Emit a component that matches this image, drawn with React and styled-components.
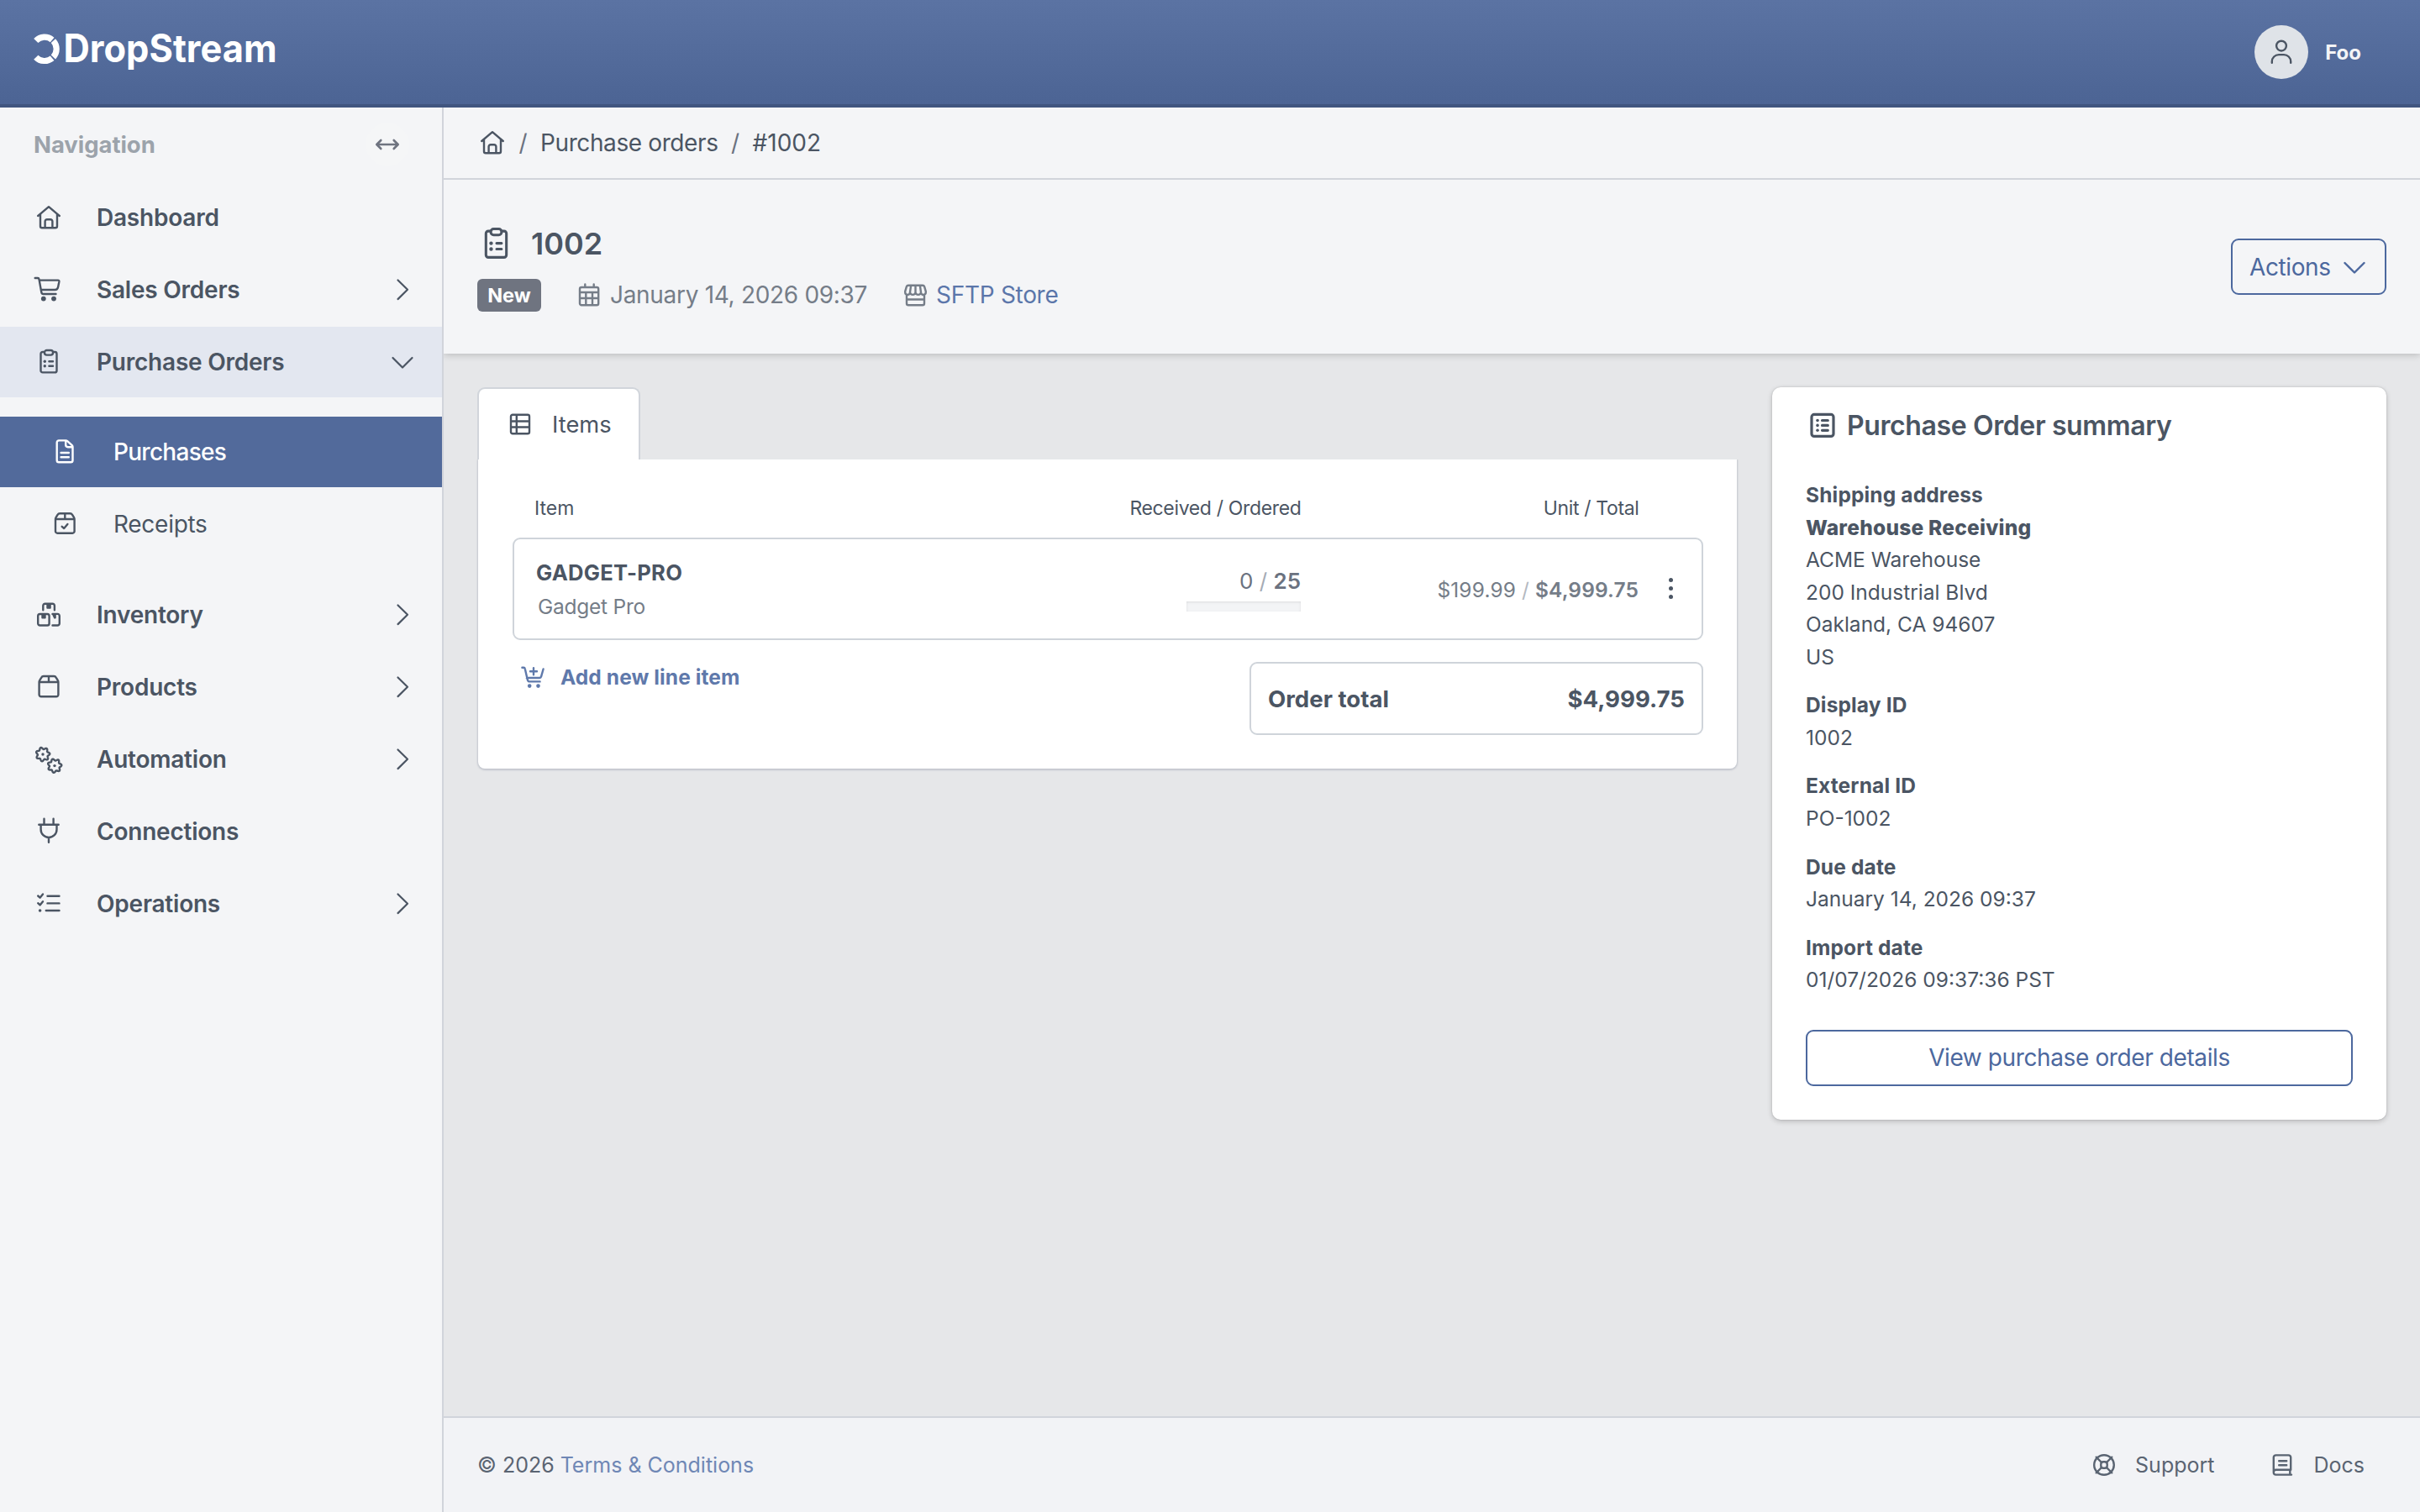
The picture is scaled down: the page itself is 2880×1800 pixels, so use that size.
import { useState } from 'react';
import styled, { createGlobalStyle, css } from 'styled-components';

const GlobalStyle = createGlobalStyle`
  * { box-sizing: border-box; }
  body { margin: 0; background: #e6e7e9; color: #4b5563; font-family: Inter, "Liberation Sans", sans-serif; }
  a { color: inherit; text-decoration: none; }
  button { font-family: inherit; cursor: pointer; }
`;

/* ---------- icons ---------- */

const IconSt = styled.svg`
  display: block;
  flex: none;
  width: 32px;
  height: 32px;
  overflow: visible;
  fill: none;
  stroke: currentColor;
  stroke-width: ${({ $w }) => $w || 2.4};
  stroke-linecap: round;
  stroke-linejoin: round;
  .dot { fill: currentColor; stroke: none; }
`;

const gear = (cx, cy) => {
  const pts = [];
  for (let i = 0; i <= 84; i++) {
    const t = (i / 84) * Math.PI * 2;
    const r = 7.2 + 1.15 * Math.cos(7 * t + 0.6);
    pts.push(`${(cx + r * Math.cos(t)).toFixed(2)} ${(cy + r * Math.sin(t)).toFixed(2)}`);
  }
  return `M${pts.join('L')}Z`;
};

const icons = {
  home: <path d="M3.2 14 16 3.2 28.8 14M6 12v14.2a2 2 0 0 0 2 2h16a2 2 0 0 0 2-2V12M11.6 28v-7.4a2.4 2.4 0 0 1 2.4-2.4h4a2.4 2.4 0 0 1 2.4 2.4V28" />,
  cart: <>
    <path d="M-.3 2H3q1.2 0 1.5 1.4L7.3 19q.4 2 2.2 2h15M5 4.6h22q1.6 0 1.4 1.6l-1.3 6.6q-.6 3.2-3.8 3.2H7" />
    <circle className="dot" cx="9.8" cy="26.6" r="2.9" /><circle className="dot" cx="22" cy="26.6" r="2.9" />
  </>,
  clipboard: <>
    <path d="M10.5 4H8.7a2.2 2.2 0 0 0-2.2 2.2v20a2.2 2.2 0 0 0 2.2 2.2h14.6a2.2 2.2 0 0 0 2.2-2.2v-20A2.2 2.2 0 0 0 23.3 4h-1.8" />
    <rect x="11" y="2" width="10" height="5.6" rx="2.6" />
    <path d="M16.4 15.3h4.6M16.4 20.7h4.6" />
    <circle className="dot" cx="11.3" cy="15.3" r="1.7" /><circle className="dot" cx="11.3" cy="20.7" r="1.7" />
  </>,
  file: <path d="M9 2.4h8.4q1 0 1.8.7l5.5 5q.8.7.8 1.8V26a2.3 2.3 0 0 1-2.3 2.3H9A2.3 2.3 0 0 1 6.7 26V4.7A2.3 2.3 0 0 1 9 2.4ZM17.2 2.6v5a2.6 2.6 0 0 0 2.6 2.6h5.4M11.6 17h9.2M11.6 22.2h9.2" />,
  receipt: <path d="M5 10v14.4a2.3 2.3 0 0 0 2.3 2.3h18a2.3 2.3 0 0 0 2.3-2.3V10M5 10q0-1 .5-1.8l2-3.4Q8.5 3.2 10.2 3.2h12.2q1.7 0 2.7 1.6l2 3.4q.5.8.5 1.8zM16.3 3.2V10M12.7 18.8l2.5 2.2 4.2-5" />,
  box: <path d="M4.6 10v15a2.3 2.3 0 0 0 2.3 2.3h18.2a2.3 2.3 0 0 0 2.3-2.3V10M4.6 10q0-1 .5-1.8l2-3.4Q8.1 3 9.8 3h12.4q1.7 0 2.7 1.8l2 3.4q.5.8.5 1.8zM16 3v7" />,
  boxes: <>
    <path d="M9.3 10.3V5a2.3 2.3 0 0 1 2.3-2.3h9A2.3 2.3 0 0 1 22.9 5v5.3" />
    <rect x="3.2" y="15" width="13.4" height="13.5" rx="2.3" />
    <path d="M20.5 28.5h6a2.3 2.3 0 0 0 2.3-2.3v-9a2.3 2.3 0 0 0-2.3-2.3h-6" />
    <path className="dot" d="M13.3 2.5h5.5v5.2q0 1-1 1h-3.5q-1 0-1-1zM7.3 15h5.4v4.5q0 1-1 1H8.3q-1 0-1-1zM19.8 15h5v4.5q0 1-1 1h-1.5z" />
  </>,
  gears: <>
    <path d={gear(9, 10)} /><path d={gear(23, 23.6)} />
    <circle className="dot" cx="9" cy="10" r="1.7" /><circle className="dot" cx="23" cy="23.6" r="1.7" />
  </>,
  plug: <path d="M4.3 7.8h23.4M10.5.7v7M21.6.7v7M6.6 8.2v5.3a9.45 9.45 0 0 0 18.9 0V8.2M16 23v5.8" />,
  tasks: <>
    <path d="M14.5 6.7h14M14.5 15.4h14M12.8 24h15.7M3.2 6.5l2.4 2.2L9 4.5M3.2 15.2l2.4 2.2L9 13.2" />
    <circle className="dot" cx="5.6" cy="24" r="1.8" />
  </>,
  calendar: <path d="M7 7h18.2a2 2 0 0 1 2 2v17.2a2 2 0 0 1-2 2H7a2 2 0 0 1-2-2V9a2 2 0 0 1 2-2ZM11.3 3.5V7M21.7 3.5V7M5 13h22M5 20h22M12.3 13v15M20 13v15" />,
  store: <path d="M8 4.700h17q1.600 0 2.100 1.500l1.700 5.600v1.300a2.900 2.900 0 0 1-5.800 0 3.300 3.300 0 0 1-6.500 0 3.300 3.300 0 0 1-6.500 0 2.900 2.900 0 0 1-5.800 0v-1.300L5.900 6.200Q6.400 4.700 8 4.700ZM10 13l1.100-8M23 13l-1.100-8M16.500 13V5M6 16v10.200a2 2 0 0 0 2 2h17a2 2 0 0 0 2-2V16M6 21.500h21" />,
  table: <path d="M7 4.800h18a2 2 0 0 1 2 2v18.400a2 2 0 0 1-2 2H7a2 2 0 0 1-2-2V6.800a2 2 0 0 1 2-2ZM11.800 5v22M5 12.500h22M5 19.500h22" />,
  addCart: <>
    <path d="M3.400 4.700h1.800q1.300 0 1.600 1.500l3 13q.5 2.200 2.300 2.200h12.500M8.800 17h15.400q1.500 0 1.800-1.400L28.600 6.500M17 5.300v8M13 9.300h8" />
    <circle className="dot" cx="12.2" cy="26.6" r="2.3" /><circle className="dot" cx="22.5" cy="26.6" r="2.3" />
  </>,
  list: <>
    <rect x="3" y="3.4" width="26" height="26" rx="3" />
    <path d="M15.500 10.500h6.800M15.500 16.400h6.800M15.500 22.300h6.800" />
    <circle className="dot" cx="10" cy="10.5" r="1.8" /><circle className="dot" cx="10" cy="16.4" r="1.8" /><circle className="dot" cx="10" cy="22.3" r="1.8" />
  </>,
  ring: <>
    <circle cx="16" cy="16" r="11.8" /><rect x="12.3" y="12.3" width="7.4" height="7.4" rx="2.8" />
    <path d="M6.700 6.700l6.300 6.300M25.300 6.700L19 13M6.700 25.300L13 19M25.300 25.300L19 19" />
  </>,
  book: <path d="M27 27.600H8.300a2.500 2.500 0 0 1-2.500-2.600V7a2.600 2.600 0 0 1 2.600-2.600h15.200A2.600 2.600 0 0 1 26.200 7v14.700H8.500a2.800 2.800 0 0 0-2.700 2.800M25.300 22v5.400M12.200 11.200h9M12.200 16.200h9" />,
  user: <><circle cx="16" cy="8.6" r="5.9" /><path d="M4.800 28.800v-1.500a8.200 8.200 0 0 1 8.200-8.200h6a8.200 8.200 0 0 1 8.200 8.200v1.500" /></>,
  resize: <path d="M4 16h24M8.300 11L3.300 16l5 5M23.700 11l5 5-5 5" />,
  right: <path d="M10.500 4.500L22 15.800 10.500 27.100" />,
  down: <path d="M4.500 11L16 22.500 27.500 11" />,
};

const Icon = ({ name, w }) => <IconSt viewBox="0 0 32 32" $w={w}>{icons[name]}</IconSt>;

const arc = (from, to) => {
  const p = (deg) => {
    const a = (deg * Math.PI) / 180;
    return `${(13 + 14.2 * Math.cos(a)).toFixed(2)} ${(20.3 + 14.2 * Math.sin(a)).toFixed(2)}`;
  };
  return `M${p(from)}A14.2 14.2 0 0 1 ${p(to)}`;
};

const Logo = () => (
  <LogoSt viewBox="0 0 292 56">
    <path d={`${arc(-136, -50)}${arc(-43, 43)}${arc(50, 136)}`} />
    <text x="35.5" y="36" textLength="254" lengthAdjust="spacingAndGlyphs">DropStream</text>
  </LogoSt>
);

/* ---------- page ---------- */

const menu = [
  { label: 'Dashboard', icon: 'home' },
  { label: 'Sales Orders', icon: 'cart', arrow: true },
  {
    label: 'Purchase Orders', icon: 'clipboard', arrow: true,
    children: [
      { label: 'Purchases', icon: 'file', active: true },
      { label: 'Receipts', icon: 'receipt' },
    ],
  },
  { label: 'Inventory', icon: 'boxes', arrow: true },
  { label: 'Products', icon: 'box', arrow: true },
  { label: 'Automation', icon: 'gears', arrow: true },
  { label: 'Connections', icon: 'plug' },
  { label: 'Operations', icon: 'tasks', arrow: true },
];

const summary = [
  { title: 'Display ID', value: '1002' },
  { title: 'External ID', value: 'PO-1002' },
  { title: 'Due date', value: 'January 14, 2026 09:37' },
  { title: 'Import date', value: '01/07/2026 09:37:36 PST' },
];

const App = () => {
  const [open, setOpen] = useState('Purchase Orders');

  return (
    <PageSt>
      <GlobalStyle />
      <HeaderSt>
        <a href="#0"><Logo /></a>
        <UserSt>
          <AvatarSt><Icon name="user" /></AvatarSt>
          Foo
        </UserSt>
      </HeaderSt>

      <BodySt>
        <SidebarSt>
          <NavHeadSt>
            Navigation
            <ToggleSt><Icon name="resize" w={2.6} /></ToggleSt>
          </NavHeadSt>
          {menu.map((item) => (
            <div key={item.label}>
              <NavItemSt href="#0" $open={item.children && open === item.label} onClick={() => setOpen(item.label)}>
                <Icon name={item.icon} />
                <span>{item.label}</span>
                {item.arrow && <Icon name={item.children && open === item.label ? 'down' : 'right'} w={2.2} />}
              </NavItemSt>
              {item.children && open === item.label && (
                <SubNavSt>
                  {item.children.map((sub) => (
                    <SubItemSt href="#0" key={sub.label} $active={sub.active}>
                      <Icon name={sub.icon} />
                      <span>{sub.label}</span>
                    </SubItemSt>
                  ))}
                </SubNavSt>
              )}
            </div>
          ))}
        </SidebarSt>

        <MainSt>
          <CrumbsSt>
            <a href="#0"><Icon name="home" /></a>
            <i>/</i>
            <a href="#0">Purchase orders</a>
            <i>/</i>
            <span>#1002</span>
          </CrumbsSt>

          <TitleBarSt>
            <div>
              <TitleSt><Icon name="clipboard" />1002</TitleSt>
              <MetaSt>
                <BadgeSt>New</BadgeSt>
                <MetaItemSt><Icon name="calendar" />January 14, 2026 09:37</MetaItemSt>
                <MetaItemSt><Icon name="store" /><a href="#0">SFTP Store</a></MetaItemSt>
              </MetaSt>
            </div>
            <ActionsSt>Actions<Icon name="down" /></ActionsSt>
          </TitleBarSt>

          <ContentSt>
            <ItemsSt>
              <TabSt><Icon name="table" />Items</TabSt>
              <PanelSt>
                <TableHeadSt>
                  <span>Item</span>
                  <span className="num">Received / Ordered</span>
                  <span className="num">Unit / Total</span>
                </TableHeadSt>
                <LineSt>
                  <div>
                    <SkuSt>GADGET-PRO</SkuSt>
                    <NameSt>Gadget Pro</NameSt>
                  </div>
                  <QtySt>
                    <p>0 <i>/</i> <b>25</b></p>
                    <BarSt />
                  </QtySt>
                  <PriceSt>$199.99 <i>/</i> <b>$4,999.75</b></PriceSt>
                  <MoreSt><span /><span /><span /></MoreSt>
                </LineSt>
                <PanelFootSt>
                  <AddSt href="#0"><Icon name="addCart" />Add new line item</AddSt>
                  <TotalSt><span>Order total</span><span>$4,999.75</span></TotalSt>
                </PanelFootSt>
              </PanelSt>
            </ItemsSt>

            <SummarySt>
              <h2><Icon name="list" w={3.2} />Purchase Order summary</h2>
              <GroupSt>
                <b>Shipping address</b>
                <strong>Warehouse Receiving</strong>
                <span>ACME Warehouse</span>
                <span>200 Industrial Blvd</span>
                <span>Oakland, CA 94607</span>
                <span>US</span>
              </GroupSt>
              {summary.map((row) => (
                <GroupSt key={row.title}>
                  <b>{row.title}</b>
                  <span>{row.value}</span>
                </GroupSt>
              ))}
              <DetailsSt>View purchase order details</DetailsSt>
            </SummarySt>
          </ContentSt>

          <FooterSt>
            <p>© 2026 <a href="#0">Terms &amp; Conditions</a></p>
            <FooterLinkSt href="#0"><Icon name="ring" />Support</FooterLinkSt>
            <FooterLinkSt href="#0"><Icon name="book" />Docs</FooterLinkSt>
          </FooterSt>
        </MainSt>
      </BodySt>
    </PageSt>
  );
};

const PageSt = styled.div`
  height: 100vh;
  display: flex;
  flex-direction: column;
`;

const HeaderSt = styled.header`
  height: 128px;
  flex: none;
  display: flex;
  justify-content: space-between;
  align-items: flex-start;
  padding: 30px 70px 0 40px;
  background: linear-gradient(#5b73a3, #4c6494);
  border-bottom: 4px solid #40557f;
`;

const LogoSt = styled.svg`
  display: block;
  width: 292px;
  height: 56px;
  margin-top: 8px;
  overflow: visible;
  path { fill: none; stroke: #fff; stroke-width: 7.2; }
  text { fill: #fff; font-size: 46px; font-weight: 700; }
`;

const UserSt = styled.div`
  display: flex;
  align-items: center;
  gap: 20px;
  color: #f3f4f6;
  font-size: 24px;
  font-weight: 700;
`;

const AvatarSt = styled.div`
  width: 64px;
  height: 64px;
  border-radius: 50%;
  display: flex;
  justify-content: center;
  align-items: center;
  background: #dfe3e8;
  color: #4b5563;
`;

const BodySt = styled.div`
  flex: 1;
  display: flex;
  min-height: 0;
`;

const SidebarSt = styled.nav`
  width: 528px;
  flex: none;
  background: #f4f5f7;
  border-right: 2px solid #d1d4db;
`;

const NavHeadSt = styled.div`
  height: 89px;
  display: flex;
  justify-content: space-between;
  align-items: center;
  padding: 0 39px 1px 40px;
  color: #9ca3ab;
  font-size: 27.5px;
  font-weight: 650;
  letter-spacing: -.002em;
`;

const ToggleSt = styled.div`
  width: 52px;
  height: 52px;
  border-radius: 50%;
  display: flex;
  justify-content: center;
  align-items: center;
  background: #f5f6f7;
  color: #6f7480;
`;

const rowStyle = css`
  height: 84px;
  margin-bottom: 2px;
  display: flex;
  align-items: center;
  font-size: 28px;
  span { flex: 1; }
`;

const NavItemSt = styled.a`
  ${rowStyle}
  padding: 0 31.5px 0 41.5px;
  font-weight: 560;
  letter-spacing: -.008em;
  background: ${({ $open }) => ($open ? '#e3e7f0' : 'transparent')};
  span { padding-left: 41.5px; }
`;

const SubNavSt = styled.div`
  padding: 21px 0 22px;
`;

const SubItemSt = styled.a`
  ${rowStyle}
  padding-left: 61px;
  color: ${({ $active }) => ($active ? '#fff' : '#4b5563')};
  background: ${({ $active }) => ($active ? '#526a9b' : 'transparent')};
  font-weight: ${({ $active }) => ($active ? 500 : 400)};
  letter-spacing: ${({ $active }) => ($active ? '-.026em' : '-.01em')};
  span { padding-left: 42px; }
`;

const MainSt = styled.main`
  flex: 1;
  min-width: 0;
  display: flex;
  flex-direction: column;
`;

const CrumbsSt = styled.div`
  height: 86px;
  display: flex;
  align-items: center;
  padding-left: 42px;
  background: #f4f5f7;
  border-bottom: 2px solid #d1d4db;
  font-size: 28px;
  a { letter-spacing: -.014em; }
  i { width: 41px; text-align: center; font-style: normal; color: #6b7280; }
`;

const TitleBarSt = styled.div`
  height: 207px;
  display: flex;
  justify-content: space-between;
  align-items: flex-start;
  padding: 56px 40px 0;
  background: #f4f5f7;
  box-shadow: 0 2px 8px rgba(0, 0, 0, .18);
  clip-path: inset(0 0 -14px 0);
  z-index: 1;
`;

const TitleSt = styled.h1`
  height: 40px;
  margin: 0;
  padding-left: 2px;
  display: flex;
  align-items: center;
  gap: 21px;
  font-size: 36px;
  font-weight: 620;
  svg { width: 41px; height: 41px; }
`;

const MetaSt = styled.div`
  display: flex;
  align-items: center;
  margin-top: 22px;
  font-size: 28px;
  letter-spacing: -.011em;
  color: #757d88;
`;

const BadgeSt = styled.span`
  width: 76px;
  height: 39px;
  margin-right: 41px;
  border-radius: 6px;
  background: #6f7480;
  color: #fff;
  font-size: 23.5px;
  font-weight: 700;
  letter-spacing: 0;
  line-height: 39px;
  text-align: center;
`;

const MetaItemSt = styled.span`
  display: flex;
  align-items: center;
  gap: 9px;
  margin-right: 41px;
  padding-bottom: 1px;
  a { color: #5b76aa; }
`;

const ActionsSt = styled.button`
  width: 185px;
  height: 67px;
  margin-top: 14px;
  padding: 0 20px 0 20px;
  display: flex;
  justify-content: space-between;
  align-items: center;
  border: 2px solid #4c689e;
  border-radius: 9px;
  background: transparent;
  color: #4c689e;
  font-size: 28px;
  letter-spacing: -.014em;
`;

const ContentSt = styled.div`
  flex: 1;
  display: flex;
  align-items: flex-start;
  padding: 40px 40px 0;
  background: #e6e7e9;
`;

const ItemsSt = styled.section`
  width: 1499px;
  margin-right: 42px;
`;

const TabSt = styled.div`
  width: 194px;
  height: 86px;
  padding-left: 33px;
  display: flex;
  align-items: center;
  gap: 22px;
  border: 2px solid #d1d5db;
  border-bottom: 0;
  border-radius: 9px 9px 0 0;
  background: #fff;
  font-size: 27.3px;
`;

const PanelSt = styled.div`
  height: 368px;
  margin-left: 1px;
  padding: 35px 40px 0 41px;
  background: #fff;
  border-radius: 0 0 8px 8px;
  box-shadow: 0 1px 2px 1px #c3c6ce;
  clip-path: inset(0 -6px -8px -6px);
`;

const columns = css`
  display: grid;
  align-items: center;
`;

const TableHeadSt = styled.div`
  ${columns}
  grid-template-columns: 1fr 340px 402px 76.5px;
  height: 46px;
  margin-bottom: 12px;
  padding-left: 26px;
  font-size: 23px;
  .num { text-align: right; letter-spacing: -.015em; }
`;

const LineSt = styled.div`
  ${columns}
  grid-template-columns: 1fr 340px 402px 75px;
  height: 122px;
  padding-left: 26px;
  border: 2px solid #cfd4da;
  border-radius: 9px;
`;

const SkuSt = styled.div`
  padding-top: 1px;
  font-size: 25.6px;
  font-weight: 700;
  line-height: 40px;
  letter-spacing: .01em;
`;

const NameSt = styled.div`
  padding-left: 2px;
  color: #757d88;
  font-size: 24.5px;
  line-height: 40px;
  letter-spacing: -.01em;
`;

const QtySt = styled.div`
  padding-bottom: 2px;
  text-align: right;
  color: #6b7280;
  font-size: 26px;
  p { margin: 0; line-height: 38px; }
  b { font-weight: 600; }
  i { font-style: normal; color: #a5abb5; }
`;

const BarSt = styled.div`
  width: 136px;
  height: 12px;
  margin: 5px 0 0 auto;
  background: #f3f4f6;
  box-shadow: inset 0 1px 3px rgba(0, 0, 0, .1);
`;

const PriceSt = styled.div`
  padding-top: 2px;
  text-align: right;
  color: #757d88;
  font-size: 24.5px;
  letter-spacing: .005em;
  b { font-weight: 600; }
  i { font-style: normal; color: #b4b9c1; }
`;

const MoreSt = styled.div`
  display: flex;
  flex-direction: column;
  gap: 5px;
  padding-left: 36px;
  padding-bottom: 1px;
  span { width: 5px; height: 5px; border-radius: 50%; background: #4b5563; }
`;

const PanelFootSt = styled.div`
  display: flex;
  justify-content: space-between;
  align-items: flex-start;
  margin-top: 26px;
`;

const AddSt = styled.a`
  height: 36px;
  padding-left: 8px;
  display: flex;
  align-items: center;
  gap: 17px;
  color: #5f79ab;
  font-size: 24.5px;
  font-weight: 700;
  letter-spacing: .004em;
`;

const TotalSt = styled.div`
  width: 540px;
  height: 87px;
  padding: 0 20px;
  display: flex;
  justify-content: space-between;
  align-items: center;
  border: 2px solid #cfd4da;
  border-radius: 9px;
  font-size: 27.6px;
  font-weight: 700;
`;

const SummarySt = styled.aside`
  flex: 1;
  height: 872px;
  padding: 24px 40px 0;
  border-radius: 10px;
  background: #fff;
  box-shadow: 0 2px 6px rgba(0, 0, 0, .2), 0 0 2px rgba(0, 0, 0, .16);
  h2 {
    height: 42px;
    margin: 0 0 43px;
    padding-left: 4px;
    display: flex;
    align-items: center;
    gap: 13px;
    font-size: 32px;
    font-weight: 630;
    letter-spacing: -.012em;
  }
`;

const GroupSt = styled.div`
  display: flex;
  flex-direction: column;
  margin-bottom: 19.2px;
  font-size: 24.5px;
  line-height: 38.5px;
  b { font-weight: 700; letter-spacing: .006em; }
  strong { font-weight: 800; letter-spacing: .01em; }
`;

const DetailsSt = styled.button`
  width: 100%;
  height: 67px;
  margin-top: 21px;
  padding: 0;
  border: 2px solid #4c689e;
  border-radius: 9px;
  background: #fff;
  color: #4c689e;
  font-size: 28px;
  letter-spacing: -.014em;
`;

const FooterSt = styled.footer`
  height: 114px;
  flex: none;
  display: flex;
  align-items: center;
  padding: 0 66px 0 40px;
  border-top: 2px solid #d1d4db;
  background: #f2f3f6;
  color: #5a6472;
  font-size: 25px;
  p { flex: 1; margin: 0; }
  p a { color: #6f87b5; }
`;

const FooterLinkSt = styled.a`
  display: flex;
  align-items: center;
  gap: 21px;
  margin-left: 65px;
`;

export default App;
